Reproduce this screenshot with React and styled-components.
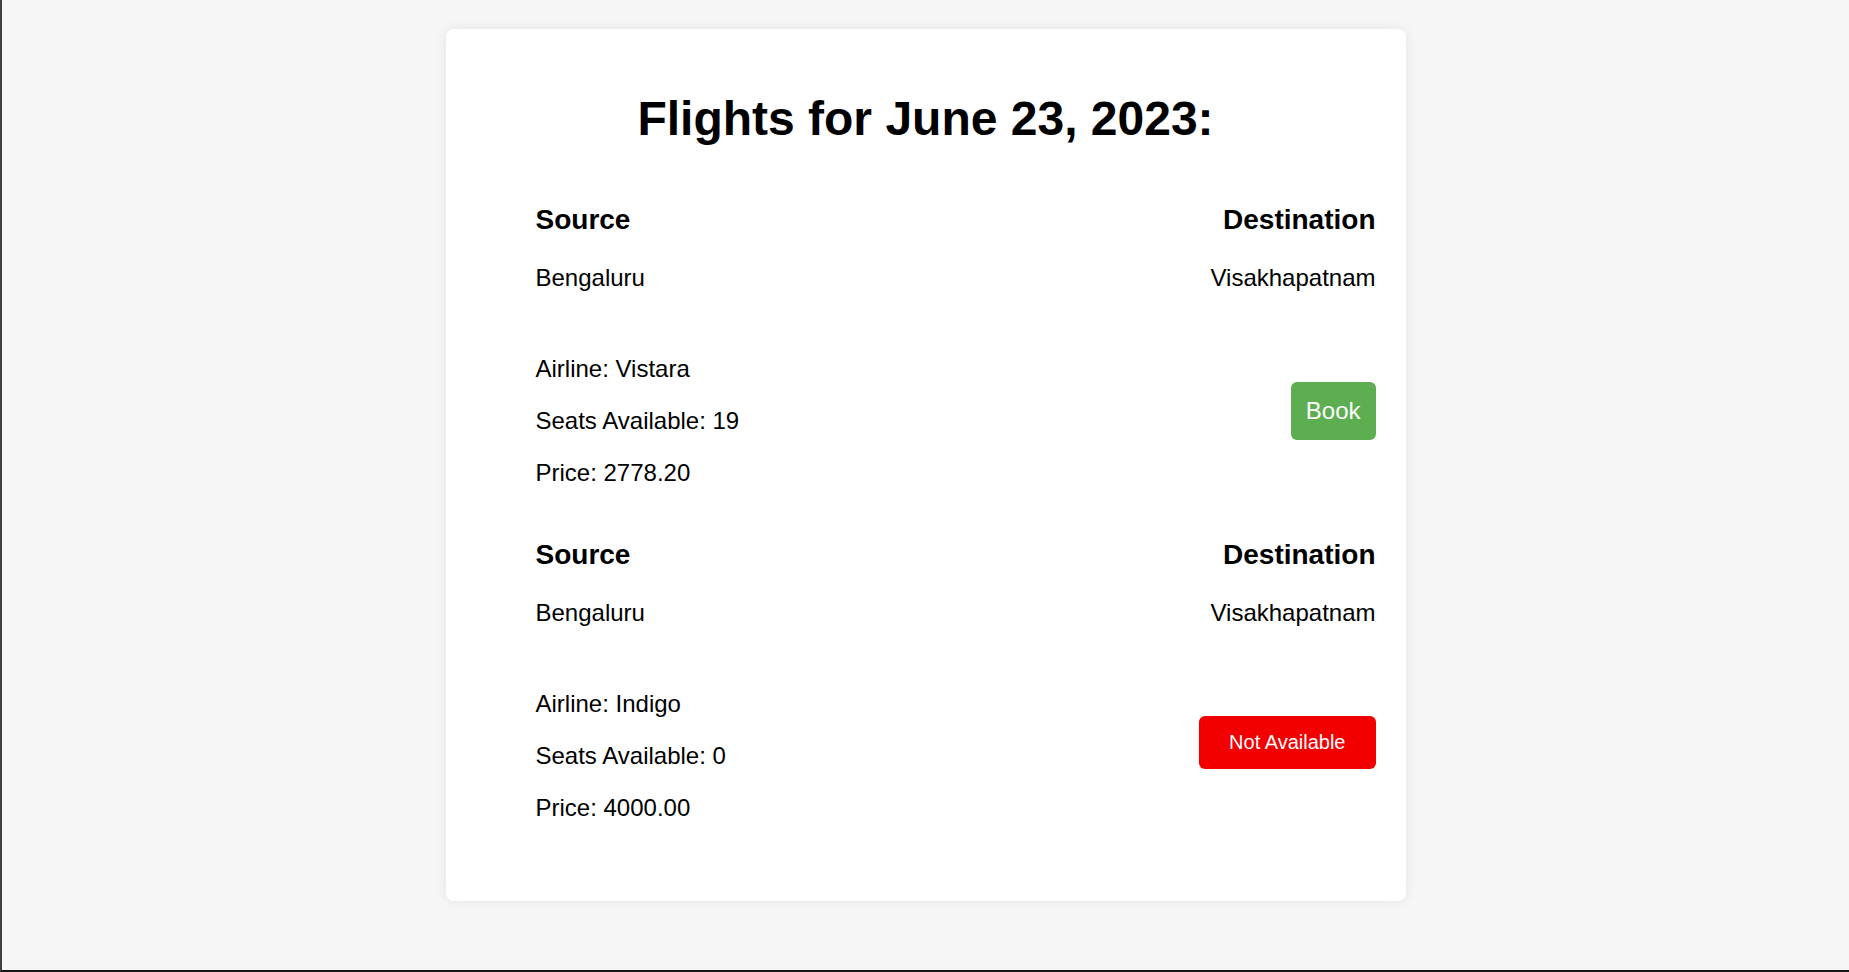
import React from 'react';
import styled, { createGlobalStyle } from 'styled-components';

const GlobalStyle = createGlobalStyle`
    html, body {
        margin: 0;
        padding: 0;
    }
    body {
        font-family: "Liberation Sans", Arial, sans-serif;
        color: #000;
        background: #f6f6f6;
    }
`;

const Page = styled.div`
    min-height: 100vh;
    box-sizing: border-box;
    padding-top: 29px;
    border-left: 2px solid #3f3f3f;
    border-bottom: 2px solid #151515;
    background: #f6f6f6;
`;

const Card = styled.div`
    width: 960px;
    box-sizing: border-box;
    margin: 0 auto;
    padding: 30px;
    background: #fff;
    border-radius: 8px;
    box-shadow: 0 0 12px rgba(0, 0, 0, 0.08);
`;

const Title = styled.h1`
    margin: 32px 0 0;
    font-size: 48px;
    font-weight: bold;
    line-height: normal;
    text-align: center;
`;

const FlightList = styled.ul`
    list-style: none;
    margin: 30px 0 25px;
    padding: 0 0 0 60px;
`;

const FlightItem = styled.li``;

const RouteRow = styled.div`
    display: flex;
    justify-content: space-between;
`;

const RouteCol = styled.div`
    text-align: ${props => props.$align || 'left'};
`;

const Label = styled.h3`
    margin: 28px 0;
    font-size: 28px;
    font-weight: bold;
    line-height: normal;
`;

const Text = styled.p`
    margin: 24px 0;
    font-size: 24px;
    line-height: normal;
`;

const DetailsRow = styled.div`
    display: flex;
    justify-content: space-between;
    align-items: center;
    margin-top: 15px;
`;

const Details = styled.div``;

const Button = styled.button`
    border: none;
    border-radius: 6px;
    color: #fff;
    font-family: "Liberation Sans", Arial, sans-serif;
    line-height: normal;
    cursor: ${props => props.disabled ? 'default' : 'pointer'};
    background: ${props => props.disabled ? '#f20000' : '#5cae50'};
    font-size: ${props => props.disabled ? '20px' : '24px'};
    padding: ${props => props.disabled ? '15px 30px' : '15px'};
    margin-bottom: ${props => props.disabled ? '27px' : '20px'};
`;

const flights = [
    { id: 1, source: 'Bengaluru', destination: 'Visakhapatnam', airline: 'Vistara', seats: 19, price: 2778.2 },
    { id: 2, source: 'Bengaluru', destination: 'Visakhapatnam', airline: 'Indigo', seats: 0, price: 4000 },
];

const Flight = ({ source, destination, airline, seats, price }) => (
    <FlightItem>
        <RouteRow>
            <RouteCol>
                <Label>Source</Label>
                <Text>{source}</Text>
            </RouteCol>
            <RouteCol $align="right">
                <Label>Destination</Label>
                <Text>{destination}</Text>
            </RouteCol>
        </RouteRow>
        <DetailsRow>
            <Details>
                <Text>Airline: {airline}</Text>
                <Text>Seats Available: {seats}</Text>
                <Text>Price: {price.toFixed(2)}</Text>
            </Details>
            {seats > 0
                ? <Button>Book</Button>
                : <Button disabled>Not Available</Button>}
        </DetailsRow>
    </FlightItem>
);

const App = () => (
    <>
        <GlobalStyle />
        <Page>
            <Card>
                <Title>Flights for June 23, 2023:</Title>
                <FlightList>
                    {flights.map(f => <Flight key={f.id} {...f} />)}
                </FlightList>
            </Card>
        </Page>
    </>
);

export default App;
